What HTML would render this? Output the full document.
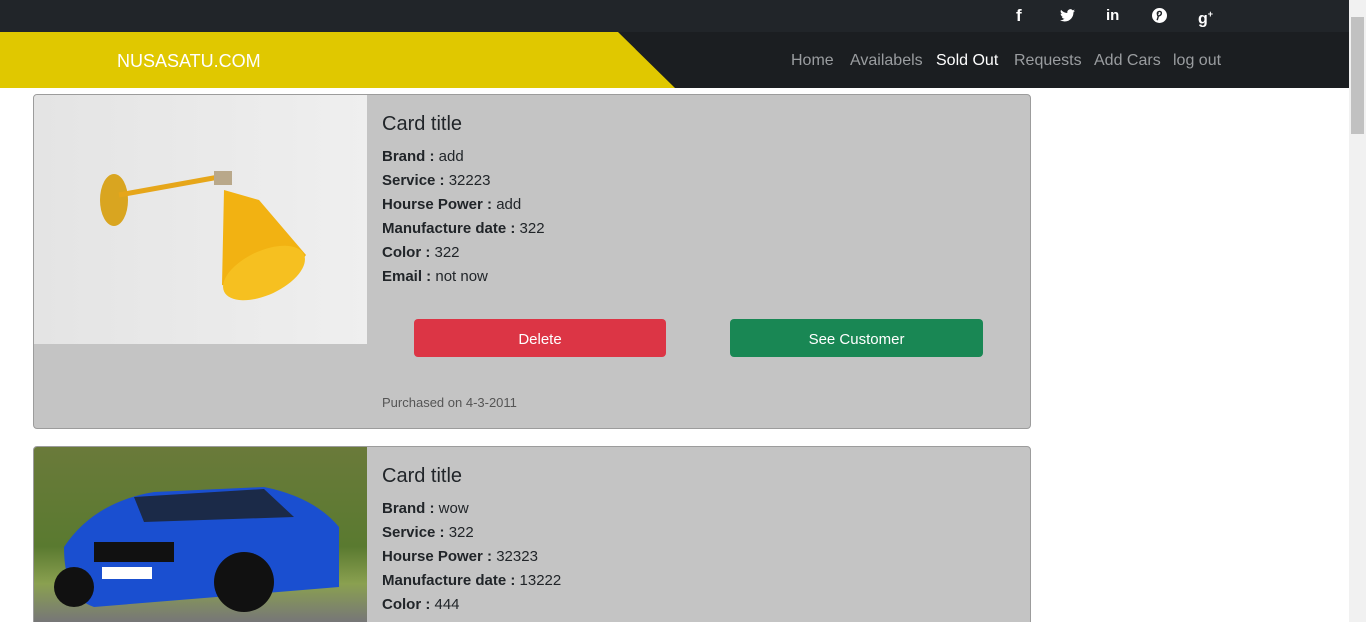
<!DOCTYPE html>
<html><head><meta charset="utf-8"><style>
*{box-sizing:border-box;margin:0;padding:0}
html,body{width:1366px;height:622px;overflow:hidden;background:#fff;font-family:"Liberation Sans",sans-serif;color:#212529}
#wrap{position:relative;width:1366px;height:622px;overflow:hidden}
.top{position:absolute;left:0;top:0;width:1349px;height:32px;background:#212529}
.soc{position:absolute;top:6px;color:#fff;font-weight:bold;font-size:17px;line-height:20px}
.nav{position:absolute;left:0;top:32px;width:1349px;height:56px;background:#1b1e21}
.yel{position:absolute;left:0;top:32px;width:675px;height:56px;background:#e0c800;clip-path:polygon(0 0,618px 0,675px 56px,0 56px)}
.logo{position:absolute;left:117px;top:51px;color:#fff;font-size:18px}
.nl{position:absolute;top:51px;font-size:16px;color:#9a9da0}
.sb{position:absolute;left:1349px;top:0;width:17px;height:622px;background:#f1f1f1}
.sb div{position:absolute;left:2px;top:17px;width:13px;height:117px;background:#c1c1c1}
.card{position:absolute;left:33px;width:998px;height:335px;background:#c4c4c4;border:1px solid #9c9c9c;border-radius:4px;overflow:hidden}
.img{position:absolute;left:0;top:0;width:333px;height:249px}
.body{position:absolute;left:348px;top:0}
h5{font-size:20px;font-weight:normal;margin-top:18px;margin-bottom:9px}
.row{font-size:15px;line-height:24px}
.row b{font-weight:bold}
.btn{position:absolute;top:224px;width:252px;height:38px;border-radius:4px;color:#fff;font-size:15px;text-align:center;line-height:41px}
.pur{position:absolute;left:348px;top:300px;font-size:13px;color:#555}
</style></head><body><div id="wrap">
<div class="top"></div>
<span class="soc" style="left:1016px">f</span>
<svg class="soc" style="left:1060px;top:9px" width="15" height="13" viewBox="0 0 24 20"><path fill="#fff" d="M24 2.4a10 10 0 0 1-2.8.8A5 5 0 0 0 23.3.4a10 10 0 0 1-3.1 1.2A4.9 4.9 0 0 0 11.8 6 14 14 0 0 1 1.7.9a4.9 4.9 0 0 0 1.5 6.6A4.9 4.9 0 0 1 1 6.9a4.9 4.9 0 0 0 3.9 4.8 5 5 0 0 1-2.2.1 4.9 4.9 0 0 0 4.6 3.4A9.9 9.9 0 0 1 0 17.3 14 14 0 0 0 7.5 19.5c9 0 14-7.5 14-14v-.6A10 10 0 0 0 24 2.4z"/></svg>
<span class="soc" style="left:1106px;font-size:15px">in</span>
<svg style="position:absolute;left:1152px;top:8px" width="15" height="15" viewBox="0 0 16 16"><circle cx="8" cy="8" r="8" fill="#fff"/><path d="M7 5c-2 1-1 4 0 3l-1.5 5M6 8c1 1 4 0 4-2.5S6 3 5.5 6" stroke="#212529" stroke-width="1.5" fill="none"/></svg>
<span class="soc" style="left:1198px;font-size:16px;top:4px">g<sup style="font-size:9px">+</sup></span>
<div class="nav"></div><div class="yel"></div>
<div class="logo">NUSASATU.COM</div>
<span class="nl" style="left:791px;top:52px">Home</span>
<span class="nl" style="left:850px;top:52px">Availabels</span>
<span class="nl" style="left:936px;top:52px;color:#fff">Sold Out</span>
<span class="nl" style="left:1014px;top:52px">Requests</span>
<span class="nl" style="left:1094px;top:52px">Add Cars</span>
<span class="nl" style="left:1173px;top:52px">log out</span>

<div class="card" style="top:94px">
<div class="img" style="background:linear-gradient(90deg,#e4e4e4,#efefef)">
<svg width="333" height="249"><ellipse cx="80" cy="105" rx="14" ry="26" fill="#d9a520"/><path d="M85 100 L185 82" stroke="#e6a61a" stroke-width="5"/><rect x="180" y="76" width="18" height="14" fill="#b9a88a"/><path d="M190 95 L225 105 L272 160 Q240 205 188 190 Z" fill="#f2b212"/><ellipse cx="230" cy="178" rx="44" ry="22" transform="rotate(-25 230 178)" fill="#f6c020"/></svg>
</div>
<div class="body"><h5>Card title</h5>
<div class="row"><b>Brand :</b> add</div><div class="row"><b>Service :</b> 32223</div><div class="row"><b>Hourse Power :</b> add</div><div class="row"><b>Manufacture date :</b> 322</div><div class="row"><b>Color :</b> 322</div><div class="row"><b>Email :</b> not now</div></div>
<div class="btn" style="left:380px;background:#dc3545">Delete</div>
<div class="btn" style="left:696px;width:253px;background:#198754">See Customer</div>
<div class="pur">Purchased on 4-3-2011</div>
</div>

<div class="card" style="top:446px">
<div class="img" style="background:linear-gradient(180deg,#6a7a3a 0,#5a7a30 40%,#8aa050 55%,#777 70%,#888 100%)">
<svg width="333" height="249"><path d="M30 100 Q60 55 120 45 L230 40 Q280 50 305 80 L305 140 L60 160 Q30 150 30 100Z" fill="#1a4fd0"/><path d="M100 50 L230 42 L260 70 L110 75Z" fill="#1b2a48"/><rect x="60" y="95" width="80" height="20" fill="#111"/><rect x="68" y="120" width="50" height="12" fill="#fff"/><circle cx="210" cy="135" r="30" fill="#111"/><circle cx="40" cy="140" r="20" fill="#111"/></svg>
</div>
<div class="body"><h5>Card title</h5>
<div class="row"><b>Brand :</b> wow</div><div class="row"><b>Service :</b> 322</div><div class="row"><b>Hourse Power :</b> 32323</div><div class="row"><b>Manufacture date :</b> 13222</div><div class="row"><b>Color :</b> 444</div><div class="row"><b>Email :</b> ok</div></div>
</div>
<div class="sb"><div></div></div>
</div></body></html>
